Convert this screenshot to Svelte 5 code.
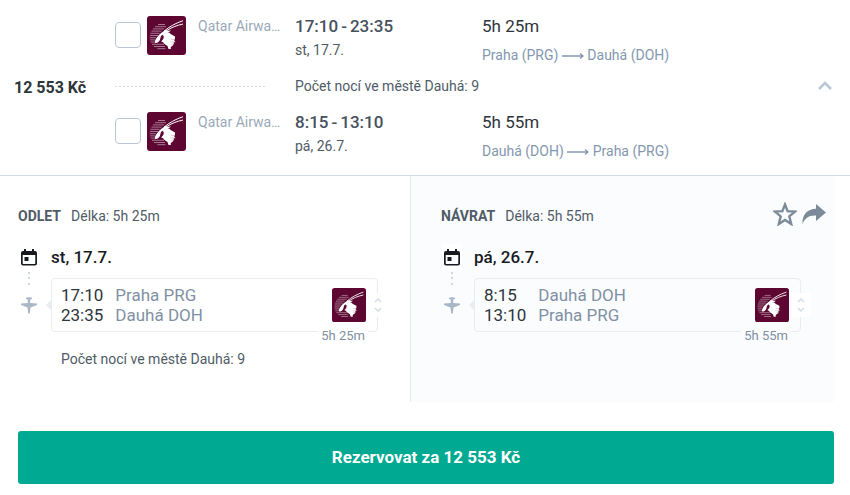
<script>
    const price = "12 553 Kč";
    const nights = "Počet nocí ve městě Dauhá: 9";

    const legs = [
        {
            id: "out",
            title: "Odlet",
            carrier: "Qatar Airways",
            date: "st, 17.7.",
            duration: "5h 25m",
            from: { time: "17:10", city: "Praha", code: "PRG" },
            to: { time: "23:35", city: "Dauhá", code: "DOH" },
        },
        {
            id: "back",
            title: "Návrat",
            carrier: "Qatar Airways",
            date: "pá, 26.7.",
            duration: "5h 55m",
            from: { time: "8:15", city: "Dauhá", code: "DOH" },
            to: { time: "13:10", city: "Praha", code: "PRG" },
        },
    ];

    let selected = $state({ out: false, back: false });
</script>

{#snippet logo()}
    <svg class="logo" viewBox="0 0 39 39" aria-hidden="true">
        <rect width="39" height="39" rx="3" fill="#5c0631" />
        <path
            d="M11 8.500h7M8 10.700h11M6 12.900h11M4.500 15.100h10M3.500 17.300h9M3 19.500h8M2.800 21.700h6M3 23.900h5M3.800 26.100h4M5 28.300h12M7 30.500h11M10.500 32.700h8"
            stroke="#a77990"
            stroke-width="1"
        />
        <!-- horns -->
        <path
            d="M17 15.200C22 10.800 29 7 36 4.700M19 15C24 11.600 30 9.300 36 8"
            fill="none"
            stroke="#fff"
            stroke-width="1"
        />
        <!-- head -->
        <path
            d="M8 26.800C7.400 24.500 10 20.500 13.500 17.500L18.500 13.800L20 14.700L24 14.500L21 16.800L17 18L14.200 19.700C13 21.500 13.600 23.500 12.300 25C11.300 26.300 9.500 27.600 8 26.800Z"
            fill="#fff"
        />
        <!-- neck -->
        <path
            d="M16.800 17.500L22 16.500L24 18.300L28 20.500V22.800H27.400V25H27.800V26H26.800V28.300H26V29.800H24.500V31H23.800V32.900H21.500L20.500 30L17.500 28L15.800 26L14.200 25.400L16.300 23C17.200 21 16.800 19.500 15.500 19Z"
            fill="#fff"
        />
        <path d="M24 23.500h4M23.500 26h5M24.500 28.300h2.500" stroke="#c9a9b7" stroke-width=".6" />
    </svg>
{/snippet}

<main>
    <header class="summary">
        <strong class="price">{price}</strong>
        <div class="legs">
            {#each legs as leg, index}
                {#if index > 0}
                    <div class="stay">
                        <span class="dots"></span>
                        <span>{nights}</span>
                    </div>
                {/if}
                <div class="leg">
                    <input
                        type="checkbox"
                        id="carrier-{leg.id}"
                        bind:checked={selected[leg.id]}
                    />
                    {@render logo()}
                    <label for="carrier-{leg.id}">{leg.carrier}</label>
                    <div class="when">
                        <strong>
                            <span>{leg.from.time}</span>
                            <span>-</span>
                            <span>{leg.to.time}</span>
                        </strong>
                        <span>{leg.date}</span>
                    </div>
                    <div class="where">
                        <span class="length">{leg.duration}</span>
                        <span class="route">
                            {leg.from.city} ({leg.from.code})
                            <svg class="arrow" viewBox="0 0 22 8" aria-hidden="true">
                                <path d="M0 4H20M18 1.500L21 4L18 6.500" />
                            </svg>
                            {leg.to.city} ({leg.to.code})
                        </span>
                    </div>
                </div>
            {/each}
        </div>
        <button class="collapse" aria-label="Sbalit">
            <svg viewBox="0 0 14 9"><path d="M1 8L7 2L13 8" /></svg>
        </button>
    </header>

    <div class="details">
        {#each legs as leg, index}
            <section class:return={index === 1}>
                <div class="head">
                    <h2>{leg.title}</h2>
                    <span>Délka: {leg.duration}</span>
                    {#if index === 1}
                        <div class="actions">
                            <button aria-label="Uložit">
                                <svg viewBox="0 0 24 24">
                                    <path
                                        d="M12 2.500L14.600 9.100L22 9.600L16.300 14.400L18.200 22L12 18L5.800 22L7.700 14.400L2 9.600L9.400 9.100Z"
                                        fill="none"
                                        stroke="#7c8b99"
                                        stroke-width="2.400"
                                    />
                                </svg>
                            </button>
                            <button aria-label="Sdílet">
                                <svg viewBox="0 0 24 24">
                                    <path
                                        d="M14 2L24 10.500L14 19V13.500C7 13 3 16 .5 22C0 13 5 7 14 6.800Z"
                                        fill="#7c8b99"
                                    />
                                </svg>
                            </button>
                        </div>
                    {/if}
                </div>
                <div class="day">
                    <span class="calendar">
                        <svg viewBox="0 0 16 17">
                            <path
                                d="M3 0h2v2h6V0h2v2h1a2 2 0 0 1 2 2v10.500a2 2 0 0 1-2 2H2a2 2 0 0 1-2-2V4a2 2 0 0 1 2-2h1ZM1.700 6v8.300a.6.6 0 0 0 .6.6h11.400a.6.6 0 0 0 .6-.6V6ZM3.500 8h4v4h-4Z"
                                fill="#171b1e"
                                fill-rule="evenodd"
                            />
                        </svg>
                    </span>
                    <h3>{leg.date}</h3>
                </div>
                <div class="flight">
                    <div class="track">
                        <svg class="dash" viewBox="0 0 2 18">
                            <path d="M0 2h2v2H0ZM0 7h2v2H0ZM0 13h2v2H0Z" fill="#d0d8e2" />
                        </svg>
                        <svg class="plane" viewBox="0 0 16 17">
                            <path
                                d="M5 .5h2L8 0L9 .5h2V2L9.200 2.500V6L16 6.500V8L9.500 10.500L8.800 16.500H7.200L6.500 10.500L0 8V6.500L6.800 6V2.500L5 2Z"
                                fill="#a9b7c6"
                            />
                        </svg>
                    </div>
                    <div class="card">
                        <dl>
                            <dt>{leg.from.time}</dt>
                            <dd>{leg.from.city} {leg.from.code}</dd>
                            <dt>{leg.to.time}</dt>
                            <dd>{leg.to.city} {leg.to.code}</dd>
                        </dl>
                        {@render logo()}
                        <span class="pointer"></span>
                        <span class="badge">{leg.duration}</span>
                        <button class="expand" aria-label="Podrobnosti">
                            <svg viewBox="0 0 8 14">
                                <path d="M1 4L4 1L7 4M1 10L4 13L7 10" />
                            </svg>
                        </button>
                    </div>
                </div>
                {#if index === 0}
                    <p>{nights}</p>
                {/if}
            </section>
        {/each}
    </div>

    <button class="book">Rezervovat za {price}</button>
</main>

<style>
    :global(body) {
        margin: 0;
        background: #fff;
    }
    main {
        font-family: Roboto, sans-serif;
        font-size: 14px;
        line-height: 16px;
        color: #4f5b66;
    }
    button {
        display: block;
        padding: 0;
        border: 0;
        background: none;
        font-family: inherit;
        cursor: pointer;
    }
    svg {
        display: block;
    }
    .summary {
        display: flex;
        align-items: center;
        padding: 0 18px 0 14px;
        border-bottom: 1px solid #d3dde7;
    }
    .price {
        width: 101px;
        font-size: 16px;
        font-weight: 700;
        color: #2e353b;
    }
    .legs {
        flex: 1;
        padding: 16px 0 15px;
    }
    .leg {
        display: grid;
        grid-template-columns: 26px 39px 85px 187px 1fr;
        height: 48px;
    }
    .leg input {
        appearance: none;
        width: 26px;
        height: 26px;
        margin: 6px 0 0;
        border: 1px solid #bac7d5;
        border-radius: 4px;
        cursor: pointer;
    }
    .leg input:checked {
        background: #00a991;
    }
    .leg .logo {
        width: 39px;
        height: 39px;
        margin-left: 6px;
    }
    .leg label {
        width: 86px;
        margin-left: 18px;
        padding-top: 2px;
        overflow: hidden;
        text-overflow: ellipsis;
        white-space: nowrap;
        color: #9aa9b8;
    }
    .when,
    .where {
        display: flex;
        flex-direction: column;
        margin-left: 30px;
    }
    .when {
        gap: 6px;
    }
    .where {
        gap: 11px;
        white-space: nowrap;
    }
    .when strong,
    .length {
        font-size: 17px;
        line-height: 20px;
    }
    .when strong {
        display: flex;
        gap: 3px;
        font-weight: 500;
        color: #46515e;
    }
    .length {
        color: #2e353b;
    }
    .route {
        color: #8497b0;
    }
    .arrow {
        display: inline-block;
        width: 22px;
        height: 8px;
    }
    .arrow path {
        fill: none;
        stroke: #8497b0;
        stroke-width: 1.300;
    }
    .stay {
        display: flex;
        align-items: center;
        gap: 30px;
        margin: 14px 0 18px;
    }
    .dots {
        width: 150px;
        height: 1px;
        background: repeating-linear-gradient(90deg, #d9dcdf 0 2px, transparent 2px 4px);
    }
    .collapse {
        padding-bottom: 4px;
    }
    .collapse svg {
        width: 14px;
        height: 9px;
    }
    .collapse path {
        fill: none;
        stroke: #bac7d5;
        stroke-width: 2.600;
    }
    .details {
        display: flex;
        padding: 0 16px 0 18px;
    }
    section {
        flex: 1;
        padding: 20px 32px 35px 0;
    }
    .return {
        padding: 20px 33px 35px 30px;
        border-left: 1px solid #e3eaf1;
        background: #fbfcfe;
    }
    .head {
        display: flex;
        align-items: center;
        gap: 10px;
        height: 40px;
    }
    h2 {
        margin: 0;
        font-size: 14px;
        font-weight: 700;
        text-transform: uppercase;
    }
    .actions {
        display: flex;
        gap: 5px;
        margin: 0 -25px 0 auto;
        padding-bottom: 4px;
    }
    .actions svg {
        width: 24px;
        height: 24px;
    }
    .day {
        display: flex;
        align-items: center;
        gap: 12px;
        padding: 8px 0;
    }
    .calendar {
        padding: 5px 2px 4px;
        margin-left: 1px;
        background: #fff;
    }
    .calendar svg,
    .plane {
        width: 16px;
        height: 17px;
    }
    h3 {
        margin: 0;
        font-size: 17px;
        font-weight: 500;
        color: #171b1e;
    }
    .flight {
        display: flex;
    }
    .track {
        display: flex;
        flex-direction: column;
        align-items: center;
        gap: 9px;
        width: 22px;
        margin: -8px 11px 0 0;
    }
    .dash {
        width: 2px;
        height: 18px;
    }
    .card {
        position: relative;
        display: flex;
        flex: 1;
        align-items: center;
        justify-content: space-between;
        padding: 6px 11px 6px 9px;
        border: 1px solid #e8edf2;
        border-radius: 4px;
    }
    dl {
        display: grid;
        grid-template-columns: auto 1fr;
        column-gap: 12px;
        margin: 0;
        font-size: 17px;
        line-height: 20px;
    }
    dt {
        color: #2e353b;
    }
    dd {
        margin: 0;
        color: #7f91a3;
    }
    .card .logo {
        width: 34px;
        height: 34px;
    }
    .pointer {
        position: absolute;
        top: 20px;
        left: -6px;
        border: 6px solid transparent;
        border-right-color: #e8edf2;
        border-left-width: 0;
    }
    .badge {
        position: absolute;
        right: 9px;
        bottom: -13px;
        padding: 0 3px;
        background: #fff;
        font-size: 13px;
        color: #7f91a3;
    }
    .return .badge {
        background: #fbfcfe;
    }
    .expand {
        position: absolute;
        top: 14px;
        right: -10px;
        padding: 5px;
        background: #fff;
    }
    .expand svg {
        width: 8px;
        height: 14px;
    }
    .expand path {
        fill: none;
        stroke: #d5dfe8;
        stroke-width: 1.600;
    }
    p {
        margin: 19px 0 0 43px;
    }
    .book {
        width: calc(100% - 34px);
        margin: 29px 16px 11px 18px;
        padding: 16px;
        border-radius: 3px;
        background: #00a991;
        font-size: 17px;
        font-weight: 700;
        line-height: 21px;
        color: #fff;
    }
</style>
